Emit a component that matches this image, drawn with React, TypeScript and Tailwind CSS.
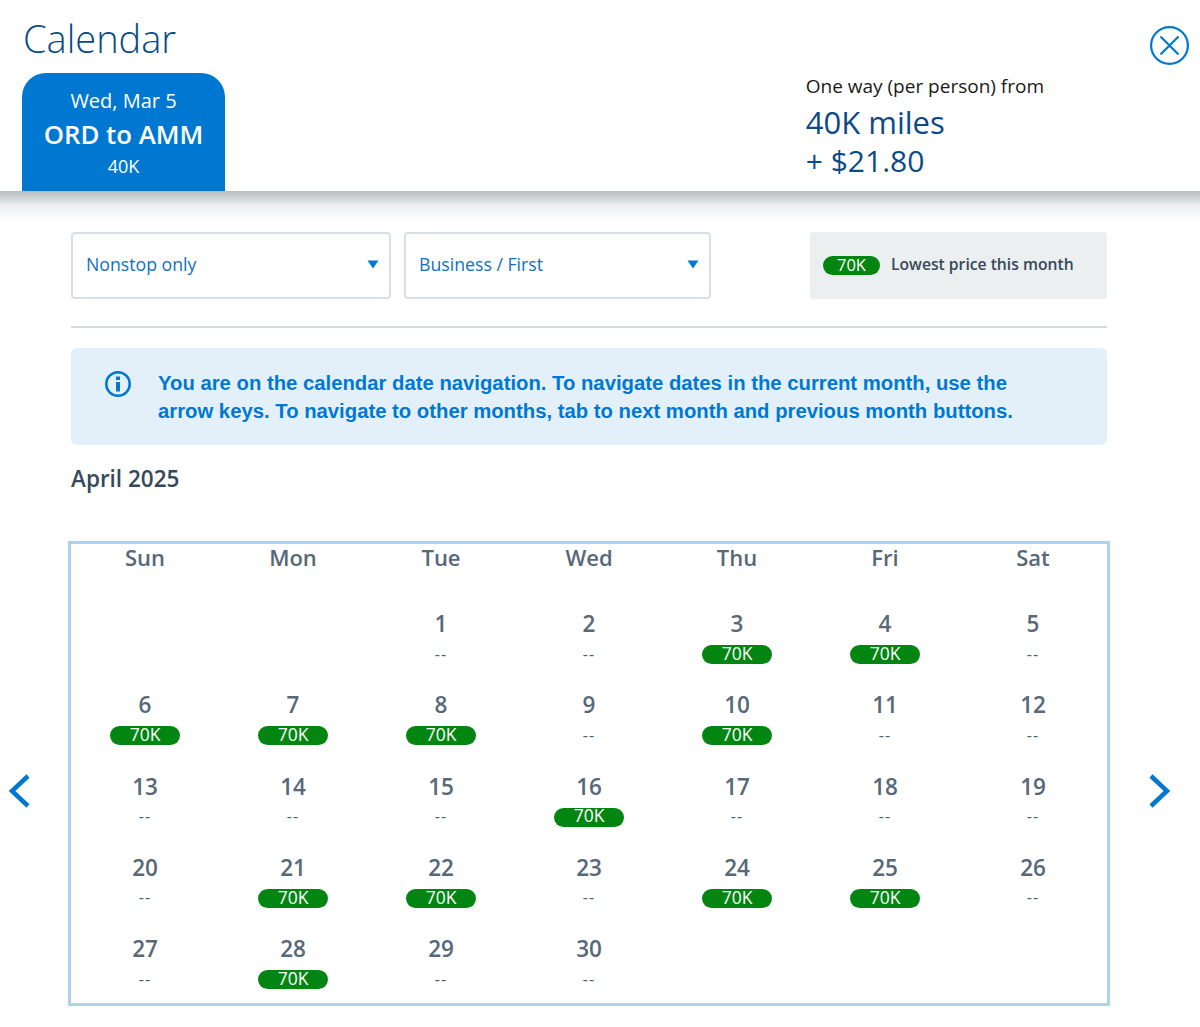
import React from "react";

const font = "font-['Open_Sans','Noto_Sans',sans-serif]";

const headers = ["Sun", "Mon", "Tue", "Wed", "Thu", "Fri", "Sat"];
const lowDays = [3, 4, 6, 7, 8, 10, 16, 21, 22, 24, 25, 28];

function Pill({ small }: { small?: boolean }) {
  return (
    <span
      className={`flex h-[19px] items-center justify-center rounded-full bg-[#038512] text-white ${
        small ? "w-[57px] pb-[1px] text-[16.5px]" : "w-[70px] pb-[3px] text-[17.5px]"
      }`}
    >
      70K
    </span>
  );
}

function Dropdown({ label, className }: { label: string; className: string }) {
  return (
    <div
      className={`flex h-[67px] items-center justify-between rounded-[4px] border-2 border-[#d6e0e8] pb-[2px] pl-[13px] pr-[10px] text-[17.7px] text-[#0f6fc6] ${className}`}
    >
      <span>{label}</span>
      <svg width="12" height="9" viewBox="0 0 12 9">
        <path d="M0.5 0.5H11.5L6 8.5Z" fill="#0078d2" />
      </svg>
    </div>
  );
}

function DayCell({ day }: { day: number }) {
  return (
    <div className="flex h-[81.25px] flex-col items-center pt-[4px]">
      <span className="text-[22.5px] font-semibold leading-[32px] text-[#566879]">{day}</span>
      <div className="mt-[5px] flex h-[19px] items-center justify-center">
        {lowDays.includes(day) ? (
          <Pill />
        ) : (
          <span className="pb-[2px] text-[16px] tracking-[1px] text-[#4e6070]">--</span>
        )}
      </div>
    </div>
  );
}

export default function App() {
  return (
    <div className={`h-[1027px] w-[1200px] overflow-hidden bg-white ${font}`}>
      {/* Header */}
      <div className="flex h-[191px] justify-between">
        <div className="pl-[22px]">
          <h1 className="h-[73px] pl-[1px] pt-[11px] text-[38px] font-light leading-[54px] text-[#0a4a86]">
            Calendar
          </h1>
          <div className="flex h-[118px] w-[203px] flex-col items-center rounded-t-[24px] bg-[#0078d2] pt-[15px] text-white">
            <span className="text-[20px] font-medium leading-[26px]">Wed, Mar 5</span>
            <span className="mt-[3px] text-[25.8px] font-semibold leading-[34px]">ORD to AMM</span>
            <span className="mt-[5px] text-[18px] font-medium leading-[20px]">40K</span>
          </div>
        </div>
        <div className="flex pr-[11px]">
          <div className="mr-[106px] pt-[73px]">
            <p className="text-[19px] leading-[26px] text-[#1a1a1a]">One way (per person) from</p>
            <p className="mt-[4px] text-[31px] leading-[38px] text-[#0a4a86]">40K miles</p>
            <p className="text-[30px] leading-[39px] text-[#0a4a86]">+ $21.80</p>
          </div>
          <svg className="mt-[26px]" width="39" height="39" viewBox="0 0 39 39" fill="none" stroke="#0078d2" strokeWidth="2.2">
            <circle cx="19.5" cy="19.5" r="18.4" />
            <path d="M10.5 10.5L28.5 28.5M28.5 10.5L10.5 28.5" />
          </svg>
        </div>
      </div>
      <div className="h-[29px] bg-gradient-to-b from-[#b7bcbf] via-[#eceeef] to-white" />

      {/* Filters */}
      <div className="ml-[71px] mt-[12px] flex w-[1036px]">
        <Dropdown label="Nonstop only" className="w-[320px]" />
        <Dropdown label="Business / First" className="ml-[13px] w-[307px]" />
        <div className="ml-auto flex h-[67px] w-[297px] items-center rounded-[4px] bg-[#ebeff0] pl-[13px]">
          <Pill small />
          <span className="ml-[11px] pb-[2px] text-[15.7px] font-semibold text-[#36495a]">Lowest price this month</span>
        </div>
      </div>
      <div className="ml-[71px] mt-[27px] h-[2px] w-[1036px] bg-[#d6dadc]" />

      {/* Info */}
      <div className="ml-[71px] mt-[20px] flex h-[97px] w-[1036px] rounded-[6px] bg-[#e3f0fa] pl-[34px] pt-[21px]">
        <svg className="mt-[2px] shrink-0" width="26" height="26" viewBox="0 0 26 26" fill="none">
          <circle cx="13" cy="13" r="11.75" stroke="#0078d2" strokeWidth="2.5" />
          <rect x="11" y="11" width="4" height="9.5" fill="#0078d2" />
          <rect x="11" y="5.5" width="4" height="3.5" fill="#0078d2" />
        </svg>
        <p className="ml-[27px] whitespace-nowrap font-['Liberation_Sans',Arial,sans-serif] text-[20.3px] font-bold leading-[28px] text-[#0078d2]">
          You are on the calendar date navigation. To navigate dates in the current month, use the
          <br />
          arrow keys. To navigate to other months, tab to next month and previous month buttons.
        </p>
      </div>

      <h2 className="ml-[71px] mt-[17px] text-[22.5px] font-semibold leading-[33px] text-[#36495a]">April 2025</h2>

      {/* Calendar */}
      <div className="mt-[46px] flex">
        <div className="flex w-[68px] items-center pl-[8px] pt-[35px]">
          <svg width="22" height="34" viewBox="0 0 22 34" fill="none" stroke="#0078d2" strokeWidth="4.5">
            <path d="M20 2L4 17L20 32" />
          </svg>
        </div>
        <div className="h-[465px] w-[1042px] border-[3px] border-[#aed2ec]">
          <div className="grid grid-cols-7">
            {headers.map((h) => (
              <div key={h} className="h-[33px] text-center text-[22px] font-semibold leading-[27px] text-[#566879]">
                {h}
              </div>
            ))}
          </div>
          <div className="mt-[27px] grid grid-cols-7">
            <div />
            <div />
            {Array.from({ length: 30 }, (_, i) => (
              <DayCell key={i} day={i + 1} />
            ))}
          </div>
        </div>
        <div className="flex flex-1 items-center pl-[39px] pt-[35px]">
          <svg width="22" height="34" viewBox="0 0 22 34" fill="none" stroke="#0078d2" strokeWidth="4.5">
            <path d="M2 2L18 17L2 32" />
          </svg>
        </div>
      </div>
    </div>
  );
}
